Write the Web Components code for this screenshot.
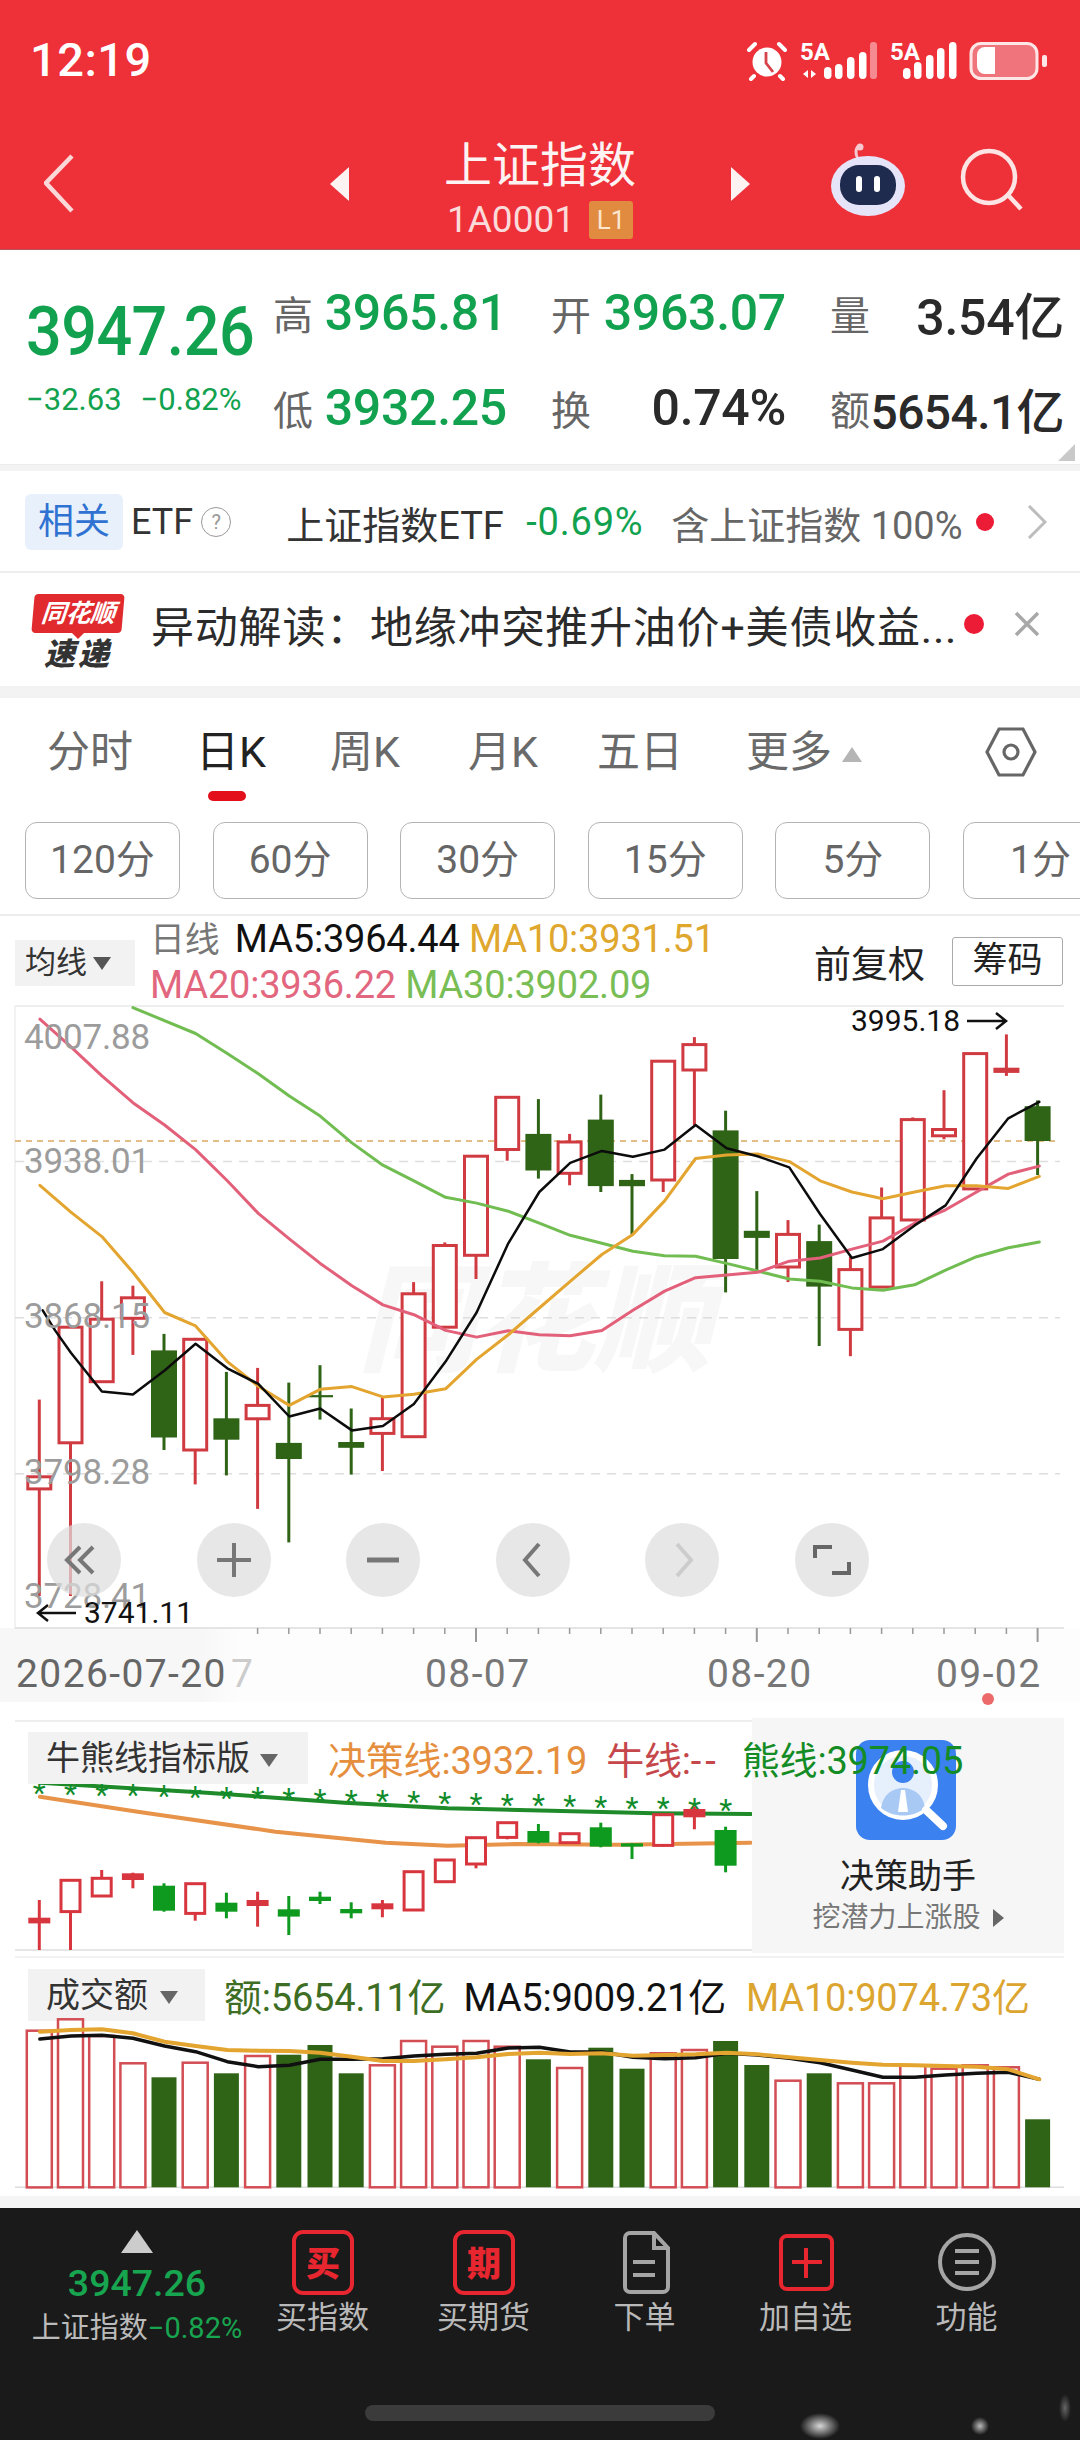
<!DOCTYPE html>
<html lang="zh">
<head>
<meta charset="utf-8">
<title>上证指数</title>
<style>
  html, body { margin: 0; padding: 0; background: #fff; }
  body { width: 1080px; height: 2440px; overflow: hidden; font-family: Roboto, "Noto Sans CJK SC", sans-serif; }
</style>
</head>
<body>
<status-bar></status-bar>
<stock-header></stock-header>
<quote-panel></quote-panel>
<etf-row></etf-row>
<news-row></news-row>
<tab-bar></tab-bar>
<period-bar></period-bar>
<ma-header></ma-header>
<k-chart></k-chart>
<date-axis></date-axis>
<bull-panel></bull-panel>
<volume-panel></volume-panel>
<bottom-bar></bottom-bar>

<script>
const FONT = 'Roboto, "Noto Sans CJK SC", sans-serif';

// the chart numbers were read off zoomed crops, so x goes through this scale
const sx = x => +(x / 1.452).toFixed(1);
const cx = i => 57 + 45.3 * i;

const line = (pts, my, color, width) => {
  const d = pts.map(p => sx(p[0]) + ',' + my(p[1]).toFixed(1)).join(' ');
  return `<polyline points="${d}" fill="none" stroke="${color}" stroke-width="${width}" stroke-linejoin="round" stroke-linecap="round"/>`;
};

const candles = (list, my, opts) => list.map((c, i) => {
  const [kind, wt, wb, bt, bb] = c;
  const x = sx(cx(i));
  const w = opts.width;
  const color = kind === 'g' ? opts.green : opts.red;
  let out = `<line x1="${x}" x2="${x}" y1="${my(wt).toFixed(1)}" y2="${my(wb).toFixed(1)}" stroke="${color}" stroke-width="${opts.wick}"/>`;
  const y = my(bt), h = Math.max(my(bb) - y, 2);
  if (kind === 'r') {
    out += `<rect x="${x - w / 2 + 1.5}" y="${y.toFixed(1)}" width="${w - 3}" height="${h.toFixed(1)}" fill="#fff" stroke="${color}" stroke-width="3"/>`;
  } else {
    out += `<rect x="${x - w / 2}" y="${y.toFixed(1)}" width="${w}" height="${h.toFixed(1)}" fill="${color}"/>`;
  }
  return out;
}).join('');

class StatusBar extends HTMLElement {
  connectedCallback() {
    const bars = (list) => list.map(b => `<rect x="${b[0]}" y="${b[1]}" width="7.5" height="${37 - b[1]}" rx="3.7" fill="#fff"/>`).join('');
    this.attachShadow({ mode: 'open' }).innerHTML = `
    <style>
      :host { display: flex; align-items: center; height: 110px; padding: 8px 33px 0 30px; box-sizing: border-box;
        background: #ee3039; color: #fff; font-family: ${FONT}; }
      .time { font-size: 47px; font-weight: 500; letter-spacing: .5px; }
      svg { display: block; margin-left: auto; margin-top: -2px; overflow: visible; }
    </style>
    <span class="time">12:19</span>
    <svg width="300" height="44" viewBox="0 -6 300 44">
      <circle cx="20" cy="20" r="14.5" fill="#fff"/>
      <path d="M19 10v11l7 9" fill="none" stroke="#d8424a" stroke-width="2.8"/>
      <path d="M2 8l6-6M38 8l-6-6M7 34l-3 3M33 34l3 3" stroke="#fff" stroke-width="4" stroke-linecap="round"/>
      <text x="53" y="18" font-size="24" font-weight="700" fill="#fff" font-family="Roboto">5A</text>
      <path d="M61 28v8l-5-4zM64 28v8l5-4z" fill="#fff"/>
      ${bars([[77, 25], [88, 22], [100, 15], [112, 10]])}
      <rect x="123" y="0" width="7" height="37" rx="3" fill="#f58a90"/>
      <text x="143" y="18" font-size="24" font-weight="700" fill="#fff" font-family="Roboto">5A</text>
      ${bars([[156, 26], [167, 20], [179, 13], [190, 6], [202, 0]])}
      <rect x="224" y="1.5" width="66" height="35" rx="10" fill="#f0747c" stroke="#fde6e6" stroke-width="3"/>
      <path d="M238 5h10v27h-10a8 8 0 0 1-8-8V13a8 8 0 0 1 8-8z" fill="#fff"/>
      <rect x="295" y="13" width="5" height="12" rx="2" fill="#fde6e6"/>
    </svg>`;
  }
}

class StockHeader extends HTMLElement {
  connectedCallback() {
    this.attachShadow({ mode: 'open' }).innerHTML = `
    <style>
      :host { display: flex; align-items: center; height: 140px; padding-left: 44px; box-sizing: border-box;
        background: #ee3039; color: #fff; font-family: ${FONT}; border-bottom: 1px solid #b9555a; }
      svg { display: block; flex: none; }
      .shift { margin-top: 9px; }
      .center { width: 380px; display: flex; flex-direction: column; align-items: center; padding-top: 20px; }
      .title { font-size: 48px; line-height: 56px; color: #fdf3f3; }
      .code { display: flex; align-items: center; gap: 14px; font-size: 37px; line-height: 44px; color: #fbdada; margin-top: 4px; }
      .lv { width: 44px; height: 38px; background: #e08b3f; color: #fbe6cf; font-size: 26px; line-height: 38px;
        text-align: center; border-radius: 3px; }
    </style>
    <svg class="shift" style="margin-right:256px" width="30" height="60" viewBox="0 0 30 60"><path d="M28 2 2 29l26 28" fill="none" stroke="#fbd8d8" stroke-width="4.5"/></svg>
    <svg class="shift" width="20" height="34" viewBox="0 0 20 34"><path d="M19 0v34L0 17z" fill="#fdf3f3"/></svg>
    <div class="center">
      <div class="title">上证指数</div>
      <div class="code"><span>1A0001</span><span class="lv">L1</span></div>
    </div>
    <svg class="shift" width="20" height="34" viewBox="0 0 20 34"><path d="M1 0v34l19-17z" fill="#fdf3f3"/></svg>
    <svg style="margin-left:80px" width="76" height="74" viewBox="0 0 76 74">
      <path d="M28 16c-3-5-3-12 2-13" fill="none" stroke="#f6c9d0" stroke-width="3"/>
      <circle cx="30" cy="4" r="3.5" fill="#f6c9d0"/>
      <ellipse cx="38" cy="43" rx="37" ry="30" fill="#e6e4f8"/>
      <rect x="10" y="22" width="56" height="40" rx="19" fill="#1e2a4e"/>
      <rect x="26" y="33" width="6" height="16" rx="3" fill="#fff"/>
      <rect x="44" y="33" width="6" height="16" rx="3" fill="#fff"/>
    </svg>
    <svg style="margin-left:54px" width="64" height="64" viewBox="0 0 64 64">
      <circle cx="29" cy="29" r="26" fill="none" stroke="#fde4e4" stroke-width="4.5"/>
      <path d="M48 47l13 14" stroke="#fde4e4" stroke-width="4.5"/>
    </svg>`;
  }
}

class QuotePanel extends HTMLElement {
  connectedCallback() {
    const cell = (label, value, color) => `<div class="cell"><span class="lb">${label}</span><span class="v ${color}">${value}</span></div>`;
    this.attachShadow({ mode: 'open' }).innerHTML = `
    <style>
      :host { display: flex; position: relative; height: 215px; box-sizing: border-box; padding: 15px 0 0 26px;
        background: #fff; font-family: ${FONT}; border-bottom: 1px solid #ececec; }
      .left { width: 247px; flex: none; }
      .price { font-size: 68px; line-height: 100px; margin-top: 17px; font-weight: 500; color: #12a24f; letter-spacing: -.6px; white-space: nowrap;
        transform: scaleX(.925); transform-origin: left center; }
      .chg { display: flex; gap: 19px; font-size: 31px; line-height: 40px; color: #12a24f; margin-top: -2px; white-space: nowrap; }
      .grid { display: grid; grid-template-columns: 234px 235px 234px; column-gap: 44px; grid-auto-rows: 95px; }
      .cell { display: flex; justify-content: space-between; align-items: center; }
      .lb { font-size: 40px; color: #666; }
      .v { font-size: 50px; font-weight: 500; white-space: nowrap; letter-spacing: -.3px; }
      .tight { font-size: 48px; letter-spacing: -.6px; }
      .g { color: #12a24f; }
      .k { color: #2a2a2a; }
      .corner { position: absolute; right: 5px; bottom: 3px; width: 0; height: 0; border-left: 17px solid transparent; border-bottom: 17px solid #c9c9c9; }
    </style>
    <div class="left">
      <div class="price">3947.26</div>
      <div class="chg"><span>−32.63</span><span>−0.82%</span></div>
    </div>
    <div class="grid">
      ${cell('高', '3965.81', 'g')}${cell('开', '3963.07', 'g')}${cell('量', '3.54亿', 'k')}
      ${cell('低', '3932.25', 'g')}${cell('换', '0.74%', 'k')}${cell('额', '5654.1亿', 'k tight')}
    </div>
    <div class="corner"></div>`;
  }
}

class EtfRow extends HTMLElement {
  connectedCallback() {
    this.attachShadow({ mode: 'open' }).innerHTML = `
    <style>
      :host { display: flex; align-items: center; height: 108px; box-sizing: border-box; padding: 2px 0 0 25px;
        border-top: 6px solid #f3f3f3; border-bottom: 2px solid #eee; background: #fff; font-family: ${FONT}; font-size: 38px; color: #333; white-space: nowrap; }
      .chip { width: 98px; height: 56px; line-height: 56px; text-align: center; background: #e8f0fb; color: #2f72d2; border-radius: 6px; font-size: 36px; }
      .etf { margin-left: 8px; font-size: 36px; }
      .q { margin-left: 8px; width: 28px; height: 28px; border: 1.5px solid #999; border-radius: 50%; color: #999; font-size: 20px; line-height: 28px; text-align: center; }
      .name { margin-left: 55px; width: 240px; }
      .pct { color: #12a24f; width: 145px; letter-spacing: .8px; }
      .inc { color: #666; }
      .dot { width: 18px; height: 18px; border-radius: 50%; background: #ec1c36; margin-left: 13px; }
      svg { margin-left: 33px; }
    </style>
    <span class="chip">相关</span><span class="etf">ETF</span><span class="q">?</span>
    <span class="name">上证指数ETF</span><span class="pct">-0.69%</span>
    <span class="inc">含上证指数 100%</span><span class="dot"></span>
    <svg width="20" height="34" viewBox="0 0 20 34"><path d="M2 1l16 16L2 33" fill="none" stroke="#bdbdbd" stroke-width="3"/></svg>`;
  }
}

class NewsRow extends HTMLElement {
  connectedCallback() {
    this.attachShadow({ mode: 'open' }).innerHTML = `
    <style>
      :host { display: flex; align-items: center; height: 125px; box-sizing: border-box; padding: 0 0 12px 32px;
        border-bottom: 12px solid #f3f3f3; background: #fff; font-family: ${FONT}; white-space: nowrap; }
      .logo { width: 92px; flex: none; display: flex; flex-direction: column; align-items: center; margin-top: 16px; }
      .badge { width: 90px; height: 39px; background: #e02a2e; color: #fff; font-size: 25px; line-height: 39px; font-weight: 700;
        text-align: center; font-style: italic; border-radius: 4px; transform: skewX(-5deg); letter-spacing: -.5px; }
      .tip { width: 0; height: 0; border: 6px solid transparent; border-top-color: #e02a2e; border-bottom: 0; }
      .fast { font-size: 31px; line-height: 31px; font-weight: 900; font-style: italic; color: #333; letter-spacing: 3px; }
      .txt { margin-left: 27px; width: 812px; font-size: 43px; color: #2b2b2b; letter-spacing: .8px; }
      .dot { width: 20px; height: 20px; border-radius: 50%; background: #ec1c36; margin-left: 1px; flex: none; }
      svg { margin-left: 30px; }
    </style>
    <div class="logo"><div class="badge">同花顺</div><div class="tip"></div><div class="fast">速递</div></div>
    <div class="txt">异动解读：地缘冲突推升油价+美债收益...</div><div class="dot"></div>
    <svg width="26" height="26" viewBox="0 0 26 26"><path d="M2 2l22 22M24 2 2 24" stroke="#a8a8a8" stroke-width="3.5"/></svg>`;
  }
}

class TabBar extends HTMLElement {
  connectedCallback() {
    this.attachShadow({ mode: 'open' }).innerHTML = `
    <style>
      :host { display: flex; align-items: flex-start; height: 124px; box-sizing: border-box; padding: 28px 43px 0 47px; background: #fff;
        font-family: ${FONT}; font-size: 43px; line-height: 52px; color: #6a6a6a; }
      .tabs { display: grid; grid-template-columns: 149px 134px 138px 129px 149px auto; }
      .on { position: relative; color: #222; }
      .on::after { content: ""; position: absolute; left: 12px; top: 65px; width: 38px; height: 10px; border-radius: 5px; background: #e30f1b; }
      .tri { display: inline-block; width: 0; height: 0; margin-left: 10px; vertical-align: 5px; border: 10px solid transparent; border-top: 0; border-bottom: 15px solid #b5b5b5; }
      svg { margin-left: auto; }
    </style>
    <div class="tabs">
      <span>分时</span><span class="on">日K</span><span>周K</span><span>月K</span><span>五日</span><span>更多<i class="tri"></i></span>
    </div>
    <svg width="52" height="52" viewBox="0 0 52 52">
      <path d="M14 3h24l12 23-12 23H14L2 26z" fill="none" stroke="#666" stroke-width="3.2"/>
      <circle cx="26" cy="26" r="7" fill="none" stroke="#666" stroke-width="3.2"/>
    </svg>`;
  }
}

class PeriodBar extends HTMLElement {
  connectedCallback() {
    const items = ['120分', '60分', '30分', '15分', '5分', '1分'];
    this.attachShadow({ mode: 'open' }).innerHTML = `
    <style>
      :host { display: flex; gap: 32.6px; height: 94px; box-sizing: border-box; padding-left: 25px; overflow: hidden; background: #fff;
        border-bottom: 2px solid #ececec; font-family: ${FONT}; }
      span { flex: none; width: 155px; height: 77px; box-sizing: border-box; border: 1.5px solid #b4b4b4; border-radius: 12px;
        font-size: 39px; line-height: 74px; text-align: center; color: #666; }
    </style>
    ${items.map(t => `<span>${t}</span>`).join('')}`;
  }
}

class MaHeader extends HTMLElement {
  connectedCallback() {
    this.attachShadow({ mode: 'open' }).innerHTML = `
    <style>
      :host { display: flex; align-items: center; height: 84px; box-sizing: border-box; padding: 7px 17px 0 15px; background: #fff;
        font-family: ${FONT}; white-space: nowrap; }
      .chip { width: 120px; height: 46px; box-sizing: border-box; padding-left: 10px; background: #f2f2f2; color: #333; font-size: 31px; line-height: 46px; margin-top: 3px; }
      .chip i { display: inline-block; margin-left: 6px; border: 9px solid transparent; border-bottom: 0; border-top: 13px solid #555; vertical-align: 3px; }
      .info { margin-left: 15px; font-size: 38px; line-height: 44px; letter-spacing: -.2px; }
      .g { color: #777; font-size: 35px; margin-right: 6px; } .k { color: #111; } .o { color: #e0a72e; } .p { color: #e2667e; } .n { color: #79bd55; }
      .adj { margin-left: auto; font-size: 37px; color: #222; }
      .btn { margin-left: 27px; width: 111px; height: 49px; box-sizing: border-box; border: 1.5px solid #aaa; border-radius: 3px; font-size: 35px; line-height: 46px; text-align: center; color: #222; }
    </style>
    <div class="chip">均线<i></i></div>
    <div class="info">
      <div><span class="g">日线</span> <span class="k">MA5:3964.44</span> <span class="o">MA10:3931.51</span></div>
      <div><span class="p">MA20:3936.22</span> <span class="n">MA30:3902.09</span></div>
    </div>
    <span class="adj">前复权</span><span class="btn">筹码</span>`;
  }
}

class KChart extends HTMLElement {
  connectedCallback() {
    const my = y => y / 2.24;
    const list = [
      ['r',895,1335,1068,1095],['r',730,1335,733,992],['r',630,855,715,855],['r',640,795,667,713],
      ['g',748,1008,785,980],['r',757,1085,760,1008],['g',833,1065,937,985],['r',824,1140,908,938],
      ['g',857,1215,992,1028],['g',818,940,885,890],['g',915,1063,990,1003],['r',890,1055,938,971],
      ['r',632,978,658,978],['r',543,733,550,733],['r',348,625,350,572],['r',216,360,218,335],
      ['g',222,400,300,382],['r',300,415,318,388],['g',212,430,268,417],['g',390,525,403,417],
      ['r',135,430,137,403],['r',83,280,100,157],['g',248,655,292,580],['g',428,608,517,533],
      ['r',493,632,525,598],['g',503,775,540,642],['r',575,798,604,738],['r',420,645,488,643],
      ['r',263,495,268,493],['r',202,312,290,304],['r',118,423,120,423],['r',77,170,155,160],
      ['g',225,392,238,316]
    ];
    const ma5 = [[62,695],[80,740],[103,790],[148,877],[193,884],[239,830],[284,770],[330,825],[375,860],[420,933],[465,915],[511,964],[556,954],[601,905],[647,810],[692,700],[738,545],[783,430],[828,365],[874,338],[919,351],[965,335],[1010,280],[1055,332],[1100,350],[1146,375],[1191,480],[1237,578],[1282,558],[1328,505],[1373,460],[1418,355],[1464,265],[1509,228]];
    const ma10 = [[58,415],[103,475],[148,530],[193,610],[239,700],[284,730],[330,810],[375,865],[420,908],[465,872],[511,866],[556,889],[601,883],[647,871],[692,805],[738,750],[783,690],[828,630],[874,570],[919,525],[965,450],[1010,355],[1055,347],[1100,345],[1146,362],[1191,405],[1237,430],[1282,445],[1328,430],[1373,416],[1418,416],[1464,422],[1509,395]];
    const ma20 = [[58,43],[103,105],[148,170],[193,230],[239,280],[284,335],[330,405],[375,478],[420,535],[465,590],[511,640],[556,683],[601,705],[647,740],[692,755],[738,741],[783,750],[828,752],[874,740],[919,695],[965,652],[1010,622],[1055,616],[1100,610],[1146,585],[1191,578],[1237,558],[1282,540],[1328,500],[1373,470],[1418,430],[1464,390],[1509,372]];
    const ma30 = [[193,17],[284,75],[330,120],[375,165],[420,215],[465,260],[511,320],[556,370],[601,405],[647,442],[692,455],[738,473],[783,500],[828,527],[874,545],[919,563],[965,573],[1010,574],[1055,590],[1100,607],[1146,625],[1191,630],[1237,645],[1282,650],[1328,638],[1373,605],[1418,575],[1464,555],[1509,542]];

    const grid = [362, 712, 1061].map(y => `<line x1="15" x2="1060" y1="${my(y)}" y2="${my(y)}" stroke="#dedede" stroke-width="1.5" stroke-dasharray="9 7"/>`).join('');
    let ticks = '';
    for (let i = 7; i < 33; i++) {
      const major = i === 14 || i === 23 || i === 32;
      ticks += `<line x1="${sx(cx(i))}" x2="${sx(cx(i))}" y1="628" y2="${major ? 642 : 634}" stroke="#999" stroke-width="${major ? 2 : 1.5}"/>`;
    }
    const glyphs = [
      '<path d="M33 24 20 37l13 13M46 24 33 37l13 13" fill="none" stroke="#777" stroke-width="4"/>',
      '<path d="M37 20v34M20 37h34" stroke="#777" stroke-width="4"/>',
      '<path d="M21 37h32" stroke="#777" stroke-width="5"/>',
      '<path d="M43 21 29 37l14 16" fill="none" stroke="#777" stroke-width="4"/>',
      '<path d="M32 21l14 16-14 16" fill="none" stroke="#ccc" stroke-width="4"/>',
      '<path d="M37 24H20v11M37 50h17V39" fill="none" stroke="#666" stroke-width="4"/>'
    ];
    this.attachShadow({ mode: 'open' }).innerHTML = `
    <style>
      :host { display: block; position: relative; height: 628px; background: #fff; font-family: ${FONT}; overflow: visible; z-index: 1; }
      svg.plot { position: absolute; left: 0; top: 0; overflow: visible; }
      .axis, .wm, .mark { position: absolute; white-space: nowrap; }
      .axis { left: 24px; font-size: 35px; line-height: 40px; color: #9c9c9c; letter-spacing: -.2px; }
      .wm { left: 358px; top: 258px; font-size: 118px; line-height: 128px; font-weight: 900; font-style: italic; color: #f7f7f7; }
      .mark { font-size: 30px; line-height: 34px; color: #111; }
      .tools { position: absolute; left: 47px; top: 523px; display: flex; gap: 75.5px; }
      .tools svg { display: block; width: 74px; height: 74px; }
    </style>
    <span class="wm">同花顺</span>
    <svg class="plot" width="1080" height="660" viewBox="0 0 1080 660">
      <line x1="15" x2="1064" y1="6" y2="6" stroke="#e8e8e8" stroke-width="1.5"/>
      <line x1="15" x2="15" y1="6" y2="628" stroke="#eee" stroke-width="1.5"/>
      <line x1="15" x2="1064" y1="628" y2="628" stroke="#ddd" stroke-width="1.5"/>
      ${grid}
      <line x1="15" x2="1060" y1="${my(316)}" y2="${my(316)}" stroke="#d9a860" stroke-width="1.5" stroke-dasharray="6 5"/>
      ${ticks}
      ${candles(list, my, { width: 26, wick: 3, green: '#2f6417', red: '#d03a41' })}
      ${line(ma30, my, '#71bd52', 3)}
      ${line(ma20, my, '#e2607a', 3)}
      ${line(ma10, my, '#e3a52f', 3)}
      ${line(ma5, my, '#0c0c0c', 2.5)}
      <path d="M970 21h38m-9-8 10 8-10 8" fill="none" stroke="#111" stroke-width="2.5" transform="translate(-3 0)"/>
      <path d="M76 613H39m9-8-10 8 10 8" fill="none" stroke="#111" stroke-width="2.5"/>
    </svg>
    <span class="axis" style="top:18px">4007.88</span>
    <span class="axis" style="top:142px">3938.01</span>
    <span class="axis" style="top:297px">3868.15</span>
    <span class="axis" style="top:453px">3798.28</span>
    <span class="axis" style="top:577px">3728.41</span>
    <span class="mark" style="left:851px;top:4px">3995.18</span>
    <span class="mark" style="left:84px;top:596px">3741.11</span>
    <div class="tools">
      ${glyphs.map(g => `<svg viewBox="0 0 74 74"><circle cx="37" cy="37" r="37" fill="#dedede" fill-opacity=".72"/>${g}</svg>`).join('')}
    </div>`;
  }
}

class DateAxis extends HTMLElement {
  connectedCallback() {
    this.attachShadow({ mode: 'open' }).innerHTML = `
    <style>
      :host { display: block; position: relative; height: 92px; box-sizing: border-box; background: linear-gradient(90deg, #f7f7f7 0, #f7f7f7 200px, #fdfdfd 240px, #fdfdfd 100%); font-family: ${FONT}; }
      .row { display: grid; grid-template-columns: 409px 282px 229px auto; padding: 22px 0 0 16px; font-size: 39px; line-height: 48px; color: #666; letter-spacing: 1.4px; }
      .row span:nth-child(n+2) { color: #777; }
      .seven { color: #ccc; margin-left: 4px; }
      .pin { position: absolute; left: 982px; top: 65px; width: 12px; height: 12px; border-radius: 50%; background: #ec6a6a; }
      .gap { position: absolute; left: 0; right: 0; bottom: 0; height: 18px; background: #fff; }
    </style>
    <div class="row"><span>2026-07-20<span class="seven">7</span></span><span>08-07</span><span>08-20</span><span>09-02</span></div>
    <div class="gap"></div>
    <div class="pin"></div>`;
  }
}

class BullPanel extends HTMLElement {
  connectedCallback() {
    const my = y => y / 3 - 20;
    const list = [
      ['s',600,750,653,670],['r',540,750,541,635],['r',510,590,535,588],['s',518,565,520,540],
      ['g',550,635,557,632],['r',550,662,551,640],['g',578,655,608,635],['s',575,680,600,618],
      ['g',588,705,628,650],['g',575,612,590,603],['g',607,655,627,640],['s',600,652,610,628],
      ['r',513,632,515,630],['r',478,547,480,545],['r',412,505,413,492],['r',367,418,368,412],
      ['g',372,430,393,428],['r',400,430,401,428],['g',368,442,382,440],['g',430,477,430,440],
      ['r',342,440,344,436],['s',320,388,327,352],['g',380,517,390,497]
    ];
    const stars = [];
    for (let i = 0; i < 23; i++) stars.push(`<text x="${sx(cx(i))}" y="${my(309 + i * 2.3).toFixed(1)}" text-anchor="middle" font-size="30" font-family="Roboto" fill="#118c2a">*</text>`);
    const bear = [[58,248],[300,278],[500,308],[650,325],[800,332],[950,340],[1090,342]];
    const bull = [[58,290],[200,335],[400,395],[560,428],[650,437],[750,432],[900,434],[1090,428]];
    this.attachShadow({ mode: 'open' }).innerHTML = `
    <style>
      :host { display: block; position: relative; height: 233px; box-sizing: border-box; background: #fff; font-family: ${FONT}; white-space: nowrap; }
      .frame { position: absolute; left: 15px; right: 16px; top: 0; bottom: 2px; border-top: 2px solid #eee; border-bottom: 2px solid #e6e6e6; }
      svg.plot { position: absolute; left: 0; top: 0; }
      .pop { position: absolute; left: 752px; top: -2px; width: 312px; height: 236px; background: #f6f6f6; display: flex; flex-direction: column; align-items: center; }
      .pop svg { margin: 22px 0 0 -4px; }
      .pop b { font-weight: 400; font-size: 34px; line-height: 44px; margin-top: 14px; color: #222; }
      .pop small { font-size: 28px; line-height: 36px; margin-top: 2px; color: #777; }
      .pop i { display: inline-block; margin-left: 12px; border: 9px solid transparent; border-right: 0; border-left: 11px solid #666; }
      .head { position: absolute; left: 28px; top: 10px; display: flex; align-items: center; font-size: 38px; letter-spacing: -.2px; }
      .chip { width: 280px; height: 52px; box-sizing: border-box; padding-left: 18px; background: #f2f2f2; color: #333; font-size: 34px; line-height: 52px; letter-spacing: 0; }
      .chip i { display: inline-block; margin-left: 10px; border: 9px solid transparent; border-bottom: 0; border-top: 13px solid #666; vertical-align: 3px; }
      .a { margin-left: 20px; color: #e58f3e; } .b { margin-left: 19px; color: #c5474b; } .c { margin-left: 22px; color: #148c25; }
      .b em { font-style: normal; letter-spacing: 4px; }
    </style>
    <div class="frame"></div>
    <svg class="plot" width="752" height="233" viewBox="0 0 752 233">
      ${line(bear, my, '#1f8a2a', 4)}
      ${line(bull, my, '#e8934a', 4)}
      ${stars.join('')}
      ${candles(list, my, { width: 22, wick: 3, green: '#0d9a1f', red: '#d8363f' })}
    </svg>
    <div class="pop">
      <svg width="100" height="100" viewBox="0 0 100 100">
        <rect width="100" height="100" rx="14" fill="#3b82f0"/>
        <circle cx="47" cy="45" r="32" fill="#e6effc" stroke="#fff" stroke-width="6"/>
        <circle cx="47" cy="32" r="11" fill="#3b82f0"/>
        <path d="M25 68c2-14 12-20 22-20s20 6 22 20c-12 10-32 10-44 0z" fill="#a9c9f5"/>
        <path d="M45 50h4l3 22h-10z" fill="#fff"/>
        <path d="M70 70l17 16" stroke="#fff" stroke-width="8" stroke-linecap="round"/>
      </svg>
      <b>决策助手</b>
      <small>挖潜力上涨股<i></i></small>
    </div>
    <div class="head">
      <span class="chip">牛熊线指标版<i></i></span>
      <span class="a">决策线:3932.19</span><span class="b">牛线:<em>--</em></span><span class="c">熊线:3974.05</span>
    </div>`;
  }
}

class VolumePanel extends HTMLElement {
  connectedCallback() {
    const my = y => y / 3 + 7;
    const tops = [212,178,228,310,352,308,340,288,284,255,340,316,243,260,243,260,298,324,263,326,280,270,243,315,362,340,370,370,316,326,316,322,478];
    const green = [4, 6, 8, 9, 10, 16, 18, 19, 22, 23, 25, 32];
    const base = my(682);
    const bars = tops.map((t, i) => {
      const x = sx(cx(i)), y = my(t), h = base - y;
      return green.includes(i)
        ? `<rect x="${x - 12.5}" y="${y.toFixed(1)}" width="25" height="${h.toFixed(1)}" fill="#2f6417"/>`
        : `<rect x="${x - 12.5}" y="${y.toFixed(1)}" width="25" height="${h.toFixed(1)}" fill="#fff" stroke="#d24e54" stroke-width="2.5"/>`;
    }).join('');
    const black = [[58,237],[103,228],[148,226],[193,235],[239,258],[284,275],[330,305],[375,320],[420,316],[465,298],[511,298],[556,296],[601,288],[647,283],[692,280],[738,264],[783,262],[828,276],[874,276],[919,292],[965,296],[1010,293],[1055,280],[1100,285],[1146,295],[1191,308],[1237,330],[1282,352],[1328,352],[1373,345],[1418,340],[1464,337],[1509,358]];
    const gold = [[58,215],[103,210],[148,208],[193,220],[239,245],[284,258],[330,270],[375,272],[420,273],[465,278],[511,290],[556,303],[601,303],[647,298],[692,292],[738,282],[783,278],[828,282],[874,280],[919,287],[965,285],[1010,283],[1055,278],[1100,283],[1146,292],[1191,300],[1237,308],[1282,314],[1328,316],[1373,318],[1418,320],[1464,328],[1509,358]];
    this.attachShadow({ mode: 'open' }).innerHTML = `
    <style>
      :host { display: block; position: relative; height: 255px; box-sizing: border-box; padding-top: 14px; background: #fff; font-family: ${FONT}; white-space: nowrap; }
      .head { display: flex; align-items: center; margin-left: 28px; font-size: 38px; letter-spacing: -.2px; }
      .chip { width: 177px; height: 52px; box-sizing: border-box; padding-left: 18px; background: #f2f2f2; color: #333; font-size: 34px; line-height: 52px; letter-spacing: 0; }
      .chip i { display: inline-block; margin-left: 12px; border: 9px solid transparent; border-bottom: 0; border-top: 13px solid #666; vertical-align: 3px; }
      .a { margin-left: 19px; color: #3d6e24; } .b { margin-left: 18px; color: #111; } .c { margin-left: 20px; color: #dca52f; }
      svg { position: absolute; left: 0; top: 0; }
      .foot { position: absolute; left: 0; right: 0; bottom: 0; height: 12px; background: #f5f5f5; }
    </style>
    <div class="head">
      <span class="chip">成交额<i></i></span>
      <span class="a">额:5654.11亿</span><span class="b">MA5:9009.21亿</span><span class="c">MA10:9074.73亿</span>
    </div>
    <svg width="1080" height="255" viewBox="0 0 1080 255">
      <line x1="15" x2="1064" y1="4" y2="4" stroke="#eee" stroke-width="1.5"/>
      <line x1="15" x2="1064" y1="${base}" y2="${base}" stroke="#ddd" stroke-width="1.5"/>
      ${bars}
      ${line(black, my, '#111', 3.5)}
      ${line(gold, my, '#e3a52f', 4)}
    </svg>
    <div class="foot"></div>`;
  }
}

class BottomBar extends HTMLElement {
  connectedCallback() {
    const items = [
      ['买指数', `<rect x="3" y="3" width="58" height="61" rx="9" fill="none" stroke="#e8262f" stroke-width="4"/><text x="32" y="47" text-anchor="middle" font-size="34" font-weight="900" fill="#e8262f" font-family="Noto Sans CJK SC">买</text>`],
      ['买期货', `<rect x="3" y="3" width="58" height="61" rx="9" fill="none" stroke="#e8262f" stroke-width="4"/><text x="32" y="47" text-anchor="middle" font-size="34" font-weight="900" fill="#e8262f" font-family="Noto Sans CJK SC">期</text>`],
      ['下单', `<path d="M13 4h24l14 15v39a5 5 0 0 1-5 5H13a5 5 0 0 1-5-5V9a5 5 0 0 1 5-5z" transform="translate(4 0)" fill="none" stroke="#a5a5a5" stroke-width="4"/><path d="M41 4v15h14" fill="none" stroke="#a5a5a5" stroke-width="4"/><path d="M20 33h22M20 46h22" stroke="#a5a5a5" stroke-width="4"/>`],
      ['加自选', `<rect x="7" y="7" width="51" height="53" rx="6" fill="none" stroke="#e8262f" stroke-width="4"/><path d="M32 19v30M18 33h30" stroke="#e8262f" stroke-width="4"/>`],
      ['功能', `<circle cx="32" cy="33" r="27" fill="none" stroke="#a5a5a5" stroke-width="4"/><path d="M20 22h24M20 33h24M20 44h24" stroke="#a5a5a5" stroke-width="4"/>`]
    ];
    this.attachShadow({ mode: 'open' }).innerHTML = `
    <style>
      :host { display: flex; flex-direction: column; height: 232px; box-sizing: border-box; font-family: ${FONT}; white-space: nowrap;
        background:
          radial-gradient(ellipse 20px 13px at 820px 218px, #d8d8d8, transparent),
          radial-gradient(ellipse 9px 9px at 980px 218px, #bbb, transparent),
          radial-gradient(ellipse 6px 14px at 1065px 200px, #666, transparent),
          #1a1a1a; }
      .row { display: flex; height: 197px; }
      .idx { width: 242px; flex: none; display: flex; flex-direction: column; align-items: center; padding: 22px 0 0 32px; box-sizing: border-box; }
      .up { width: 0; height: 0; border: 16px solid transparent; border-top: 0; border-bottom: 23px solid #ccc; }
      .p { font-size: 37.5px; line-height: 48px; margin-top: 6px; color: #18a550; font-weight: 500; }
      .n { font-size: 29px; line-height: 36px; margin-top: 3px; color: #bbb; }
      .n em { font-style: normal; color: #18a550; }
      .it { width: 161px; flex: none; display: flex; flex-direction: column; align-items: center; padding-top: 21px; box-sizing: border-box; }
      .it svg { display: block; }
      .it span { font-size: 31px; line-height: 40px; margin-top: 1px; color: #b9b9b9; }
      .home { align-self: center; width: 350px; height: 16px; border-radius: 8px; background: #3b3b3b; }
    </style>
    <div class="row">
      <div class="idx"><div class="up"></div><div class="p">3947.26</div><div class="n">上证指数<em>−0.82%</em></div></div>
      ${items.map(i => `<div class="it"><svg width="64" height="68" viewBox="0 0 64 68">${i[1]}</svg><span>${i[0]}</span></div>`).join('')}
    </div>
    <div class="home"></div>`;
  }
}

customElements.define('status-bar', StatusBar);
customElements.define('stock-header', StockHeader);
customElements.define('quote-panel', QuotePanel);
customElements.define('etf-row', EtfRow);
customElements.define('news-row', NewsRow);
customElements.define('tab-bar', TabBar);
customElements.define('period-bar', PeriodBar);
customElements.define('ma-header', MaHeader);
customElements.define('k-chart', KChart);
customElements.define('date-axis', DateAxis);
customElements.define('bull-panel', BullPanel);
customElements.define('volume-panel', VolumePanel);
customElements.define('bottom-bar', BottomBar);
</script>
</body>
</html>
